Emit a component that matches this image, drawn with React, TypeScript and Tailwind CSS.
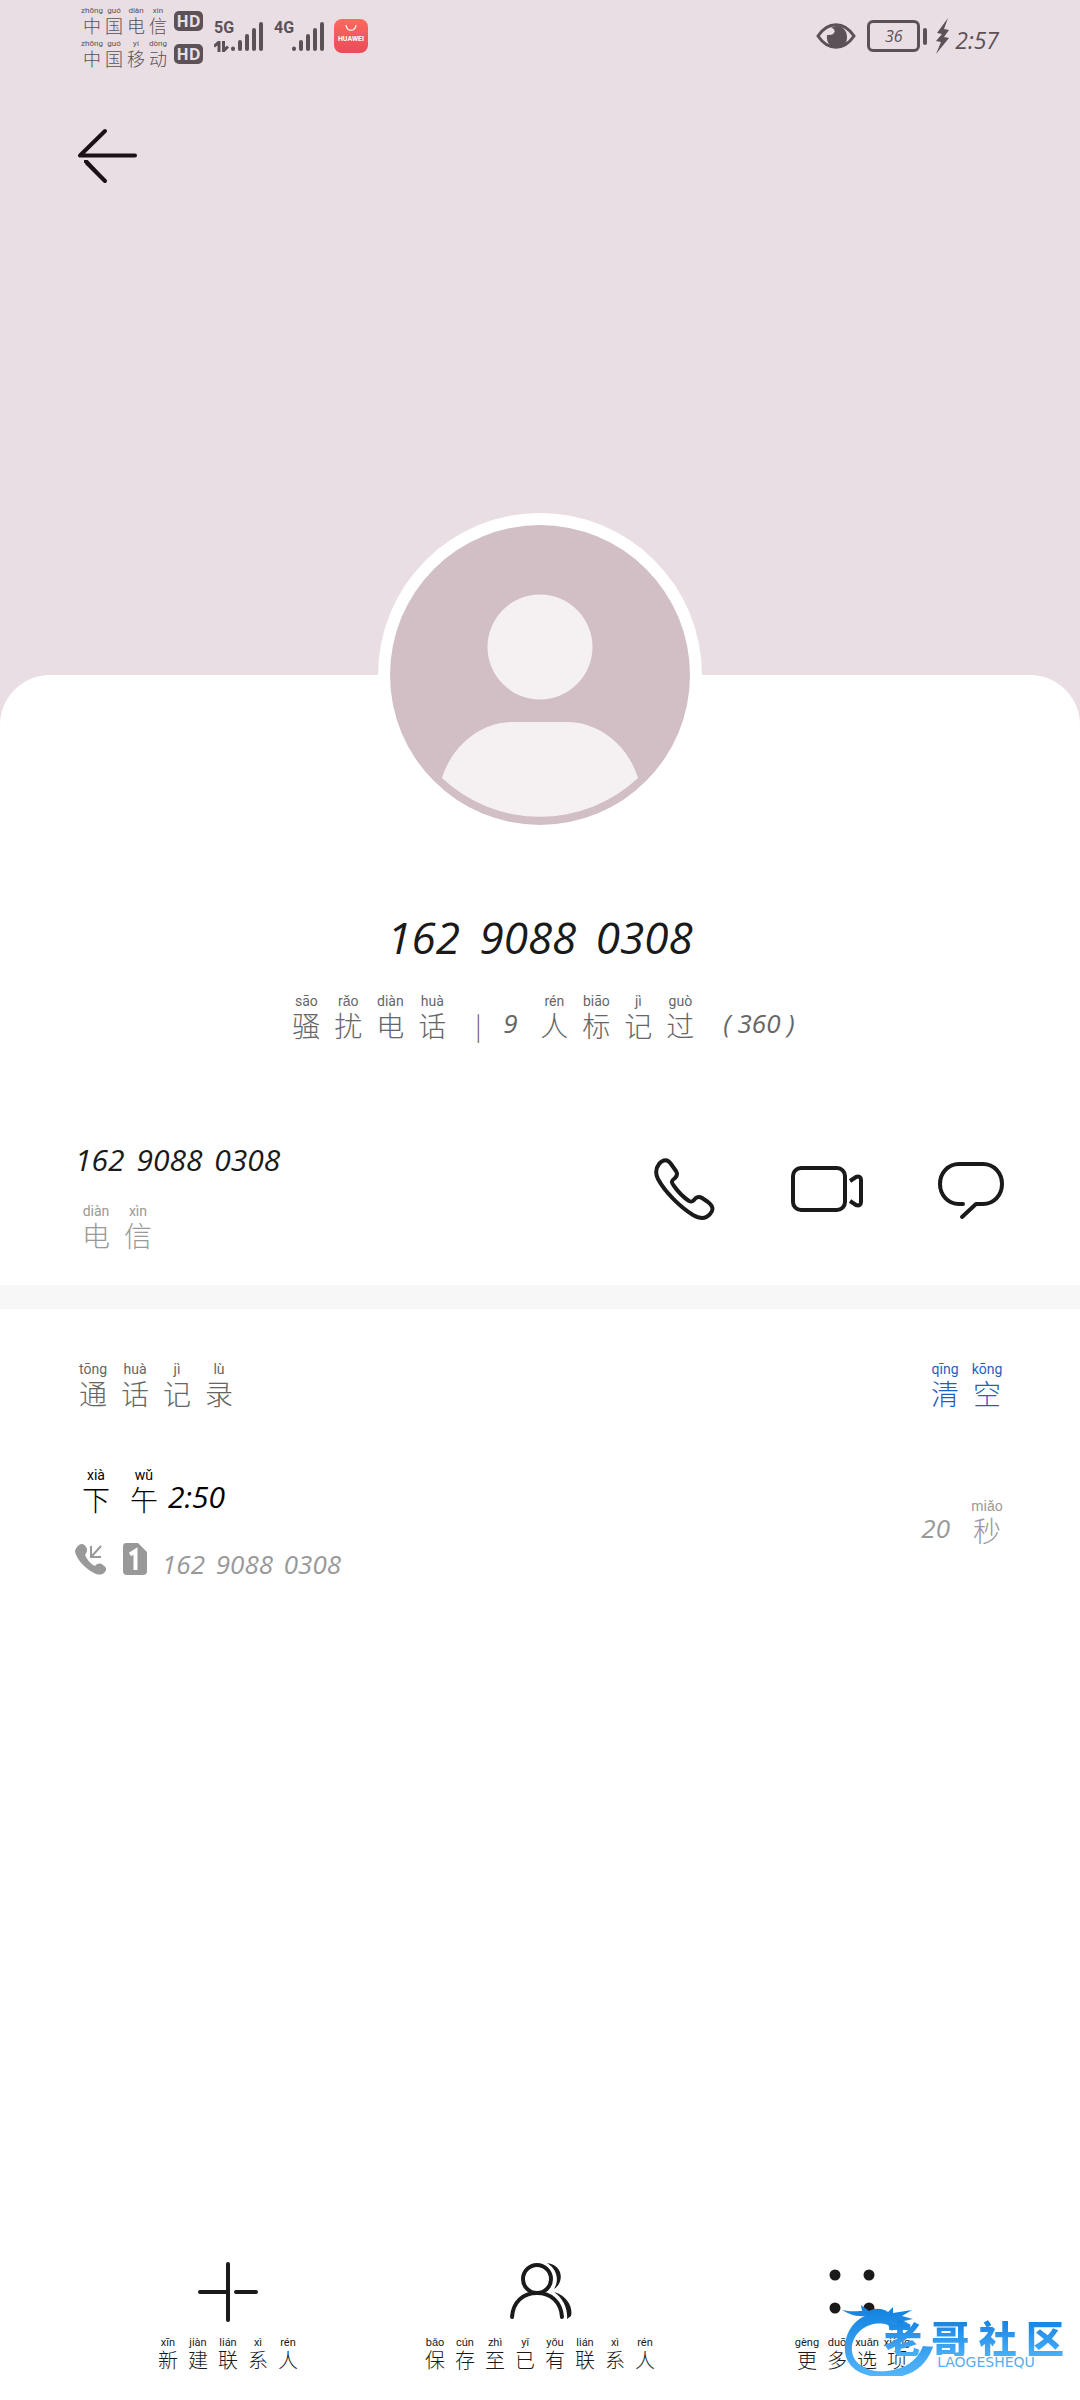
import type { ReactNode } from "react";

const HAND = "font-['Open_Sans',sans-serif] italic";

type Pair = [string, string];

const sizes = {
  xs: { cell: "w-[22px]", rt: "text-[8px] leading-[9px]", ch: "text-[18px] leading-[20px]" },
  sm: { cell: "w-[30px]", rt: "text-[11px] leading-[12px]", ch: "text-[20px] leading-[22px]" },
  lg: { cell: "w-[42px]", rt: "text-[14px] leading-[16px]", ch: "text-[28px] leading-[32px]" },
  xl: { cell: "w-[48px]", rt: "text-[14px] leading-[16px]", ch: "text-[28px] leading-[32px]" },
};

function Annotated({ pairs, size }: { pairs: Pair[]; size: keyof typeof sizes }) {
  const s = sizes[size];
  return (
    <span className="flex">
      {pairs.map(([ch, py]) => (
        <ruby key={ch} className={`flex flex-col-reverse items-center ${s.cell}`}>
          <span className={`font-light ${s.ch}`}>{ch}</span>
          <rt className={`block whitespace-nowrap font-['Roboto',sans-serif] ${s.rt}`}>{py}</rt>
        </ruby>
      ))}
    </span>
  );
}

function PhoneNumber({ className, gap }: { className: string; gap: string }) {
  return (
    <span className={`block whitespace-nowrap ${HAND} ${className}`}>
      <span>162</span> <span className={gap}>9088</span> <span className={gap}>0308</span>
    </span>
  );
}

function HdBadge() {
  return (
    <span className="flex h-[20px] w-[29px] items-center justify-center rounded-[5px] bg-[#5b5156] font-['Open_Sans',sans-serif] text-[16px] leading-[20px] font-bold text-[#e9dee4]">
      HD
    </span>
  );
}

function Bars() {
  return (
    <svg className="h-[32px] w-[34px]" viewBox="0 0 34 32" stroke="#5b5156" strokeWidth="4" strokeLinecap="round" aria-hidden="true">
      <path d="M3 28.5v.5M10 22v7M17 16v13M24 10v19M31 4v25" />
    </svg>
  );
}

function StatusBar() {
  return (
    <div className="flex h-[72px] items-start justify-between px-[81px] text-[#5b5156]">
      <div className="flex">
        <div className="flex flex-col gap-[4px] pt-[6px]">
          <div className="flex items-center gap-[5px]">
            <Annotated size="xs" pairs={[["中", "zhōng"], ["国", "guó"], ["电", "diàn"], ["信", "xìn"]]} />
            <HdBadge />
          </div>
          <div className="flex items-center gap-[5px]">
            <Annotated size="xs" pairs={[["中", "zhōng"], ["国", "guó"], ["移", "yí"], ["动", "dòng"]]} />
            <HdBadge />
          </div>
        </div>
        <div className="ml-[11px] flex pt-[20px]">
          <div className="flex w-[16px] flex-col font-['Roboto',sans-serif] text-[16px] leading-[16px] font-bold">
            5G
            <svg className="mt-[5px] h-[11px] w-[15px]" viewBox="0 0 15 11" fill="none" stroke="#5b5156" strokeWidth="3" aria-hidden="true">
              <path d="M5 11V1L0 5.500M9.500 0v10L14 5.500" />
            </svg>
          </div>
          <Bars />
        </div>
        <div className="ml-[10px] flex pt-[20px]">
          <span className="w-[17px] font-['Roboto',sans-serif] text-[16px] leading-[16px] font-bold">4G</span>
          <Bars />
        </div>
        <div className="mt-[19px] ml-[9px] flex h-[34px] w-[34px] flex-col items-center rounded-[8px] bg-linear-to-b from-[#fb6a5e] to-[#ea4b59] pt-[6px] text-white">
          <svg className="h-[7px] w-[12px]" viewBox="0 0 12 7" fill="none" stroke="#ffe3df" strokeWidth="1.500" aria-hidden="true">
            <path d="M1 0c1 7 9 7 10 0" />
          </svg>
          <span className="mt-[3px] font-['Roboto',sans-serif] text-[7px] leading-[8px] font-bold">HUAWEI</span>
        </div>
      </div>
      <div className="flex h-[72px] items-center">
        <svg className="h-[28px] w-[40px]" viewBox="0 0 40 28" aria-hidden="true">
          <path d="M2 14C12-1 28-1 38 14 28 29 12 29 2 14Z" fill="none" stroke="#5b5156" strokeWidth="3" />
          <path d="M15 6c5 0 6 8-4 7-1 8 4 13 10 13s10-4 10-11S26 4 21 4c-3 0-4 1-6 2Z" fill="#5b5156" />
        </svg>
        <div className={`ml-[11px] flex h-[32px] w-[53px] items-center justify-center rounded-[6px] border-3 border-[#5b5156] text-[16px] ${HAND}`}>36</div>
        <div className="ml-[3px] h-[17px] w-[4px] rounded-full bg-[#5b5156]" />
        <svg className="ml-[8px] h-[36px] w-[14px]" viewBox="0 0 14 36" fill="#5b5156" aria-hidden="true">
          <path d="M13 0 2 15l5 1-6 7 5 1-5 12 13-16-5-1 5-7-5-1Z" />
        </svg>
        <span className={`mt-[8px] ml-[6px] text-[23px] leading-[32px] ${HAND}`}>2:57</span>
      </div>
    </div>
  );
}

function Avatar() {
  return (
    <svg className="h-[324px] w-[324px]" viewBox="0 0 324 324" role="img" aria-label="联系人头像">
      <circle cx="162" cy="162" r="162" fill="#fff" />
      <circle cx="162" cy="162" r="150" fill="#d1bfc5" />
      <circle cx="162" cy="134" r="52.500" fill="#f5f1f3" />
      <path d="M64 265C75 230 105 209 135 209h54c30 0 60 21 71 56a143 143 0 0 1-196 0Z" fill="#f5f1f3" />
    </svg>
  );
}

function LineIcon({ label, box, view, children }: { label: string; box: string; view: string; children: ReactNode }) {
  return (
    <button type="button" aria-label={label}>
      <svg className={box} viewBox={view} fill="none" stroke="#1a1a1a" strokeWidth="4" strokeLinecap="round" strokeLinejoin="round" aria-hidden="true">
        {children}
      </svg>
    </button>
  );
}

function ActionButton({ icon, pairs }: { icon: ReactNode; pairs: Pair[] }) {
  return (
    <button type="button" className="flex flex-1 flex-col items-center gap-[13px]">
      <svg className="h-[64px] w-[64px]" viewBox="0 0 64 64" fill="none" stroke="#1a1a1a" strokeWidth="4" strokeLinecap="round" aria-hidden="true">
        {icon}
      </svg>
      <Annotated size="sm" pairs={pairs} />
    </button>
  );
}

function Watermark() {
  return (
    <div className="pointer-events-none absolute right-[16px] bottom-[24px] flex w-[222px] justify-end pb-[8px]">
      <svg className="absolute bottom-0 left-0 h-[74px] w-[92px]" viewBox="0 0 92 74" aria-hidden="true">
        <defs>
          <linearGradient id="wave" x1="0" y1="0" x2="0" y2="1">
            <stop offset="0" stopColor="#0f80e0" />
            <stop offset="1" stopColor="#55b6fa" />
          </linearGradient>
        </defs>
        <path d="M0 8c9 2 13 1 20 1L19 3l8 6c6-3 13-3 19 1l5-5v6l19-3-10 6 11 3-9 2 7 4-12 0-7 6-4-6c-14-5-33 3-36 21-2 17 15 27 35 25 18-2 30-10 36-25 8 1 11 0 10 1-8 22-25 31-47 31C17 75 1 64 3 43 4 29 13 18 23 14 14 15 7 12 0 8Z" fill="url(#wave)" />
      </svg>
      <div className="relative flex w-[180px] flex-col items-center">
        <div className="flex w-full justify-between bg-linear-to-b from-[#0f80e0] to-[#48aff8] bg-clip-text text-[38px] leading-[38px] font-black text-transparent">
          <span>老</span>
          <span>哥</span>
          <span>社</span>
          <span>区</span>
        </div>
        <span className="ml-[24px] font-['DejaVu_Sans',sans-serif] text-[14px] leading-[12px] text-[#55aef2]">LAOGESHEQU</span>
      </div>
    </div>
  );
}

export default function App() {
  return (
    <div className="relative flex min-h-screen flex-col bg-[#e9dee4] font-['Noto_Sans_CJK_SC',sans-serif] text-[#1a1a1a]">
      <StatusBar />
      <header className="px-[76px] pt-[54px]">
        <button type="button" aria-label="返回" className="block">
          <svg className="h-[60px] w-[64px]" viewBox="0 0 64 60" fill="none" stroke="#1a1218" strokeWidth="4" strokeLinecap="round" aria-hidden="true">
            <path d="M29 5 4 29.500h55" strokeLinejoin="round" />
            <path d="M8 35.500h3L29 55" strokeLinecap="butt" strokeWidth="3" />
            <path d="M11 37 29 55" />
          </svg>
        </button>
      </header>

      <main className="mt-[489px] flex flex-1 flex-col rounded-t-[50px] bg-white">
        <section className="-mt-[162px] flex flex-col items-center">
          <Avatar />
          <h1 className="mt-[72px]">
            <PhoneNumber className="text-[44px] leading-[56px]" gap="ml-[8px]" />
          </h1>
          <div className="mt-[28px] flex items-end text-[#666]">
            <Annotated size="lg" pairs={[["骚", "sāo"], ["扰", "rǎo"], ["电", "diàn"], ["话", "huà"]]} />
            <span className="w-[50px] text-center text-[26px] leading-[32px] font-light">|</span>
            <span className={`w-[30px] text-[26px] leading-[36px] ${HAND}`}>9</span>
            <Annotated size="lg" pairs={[["人", "rén"], ["标", "biāo"], ["记", "jì"], ["过", "guò"]]} />
            <span className={`ml-[22px] text-[26px] leading-[36px] ${HAND}`}>( 360 )</span>
          </div>
        </section>

        <section className="mt-[99px] flex items-center justify-between px-[75px] pb-[34px]">
          <div className="flex flex-col gap-[23px]">
            <PhoneNumber className="text-[30px] leading-[40px]" gap="ml-[4px]" />
            <div className="text-[#999]">
              <Annotated size="lg" pairs={[["电", "diàn"], ["信", "xìn"]]} />
            </div>
          </div>
          <div className="mb-[14px] flex items-center gap-[73px]">
            <LineIcon label="拨打电话" box="h-[64px] w-[64px]" view="0 0 64 64">
              <path d="M6 7c4-5 9-5 12 0l5 7c2 3 1 5-1 7-4 3-4 4-1 8 5 7 9 11 15 15 2 1 3 1 5-1 2-3 5-4 8-2l6 4c5 4 6 8 2 12-4 5-10 5-17 1C27 50 12 35 5 22 2 16 3 11 6 7Z" />
            </LineIcon>
            <LineIcon label="视频通话" box="h-[64px] w-[74px]" view="0 0 74 64">
              <rect x="3" y="11" width="52" height="42" rx="8" />
              <path d="m60 24 6-4c3-1 5 0 5 3v22c0 3-2 4-5 3l-6-4" strokeLinecap="butt" />
            </LineIcon>
            <LineIcon label="发送信息" box="h-[64px] w-[68px]" view="0 0 68 64">
              <path d="M26 47h-4C11 47 3 38 3 27S11 7 22 7h24c11 0 19 9 19 20s-8 20-19 20h-7L25 60" />
            </LineIcon>
          </div>
        </section>

        <div className="h-[24px] bg-[#f7f7f7]" />

        <section className="px-[72px] pt-[52px]">
          <div className="flex justify-between">
            <h2 className="text-[#666]">
              <Annotated size="lg" pairs={[["通", "tōng"], ["话", "huà"], ["记", "jì"], ["录", "lù"]]} />
            </h2>
            <button type="button" className="text-[#1f5fbf]">
              <Annotated size="lg" pairs={[["清", "qīng"], ["空", "kōng"]]} />
            </button>
          </div>
          <div className="mt-[58px] flex items-center justify-between">
            <div className="flex flex-col gap-[26px]">
              <div className="flex items-end text-black">
                <Annotated size="xl" pairs={[["下", "xià"], ["午", "wǔ"]]} />
                <span className={`text-[30px] leading-[36px] ${HAND}`}>2:50</span>
              </div>
              <div className="flex h-[36px] items-center text-[#999]">
                <svg className="ml-[2px] h-[34px] w-[34px]" viewBox="0 0 34 34" aria-hidden="true">
                  <path d="M3 5c3-4 7-4 9 0 2 3 1 5-1 8 2 5 6 9 10 11 3-3 5-3 8-1 4 3 4 5 1 8-3 2-6 2-10 0C10 26 3 17 1 10c0-2 1-4 2-5Z" fill="#999" />
                  <path d="M27 4 18 14M17 4v11h10" fill="none" stroke="#999" strokeWidth="2" />
                </svg>
                <svg className="ml-[14px] h-[34px] w-[26px]" viewBox="0 0 26 34" aria-hidden="true">
                  <path d="M4 1h12l9 9v19q0 4-4 4H5q-4 0-4-4V5q0-4 3-4Z" fill="#999" />
                  <path d="M8 12.500 13.500 9v19" fill="none" stroke="#fff" strokeWidth="4" />
                </svg>
                <div className="ml-[14px] pt-[10px]">
                  <PhoneNumber className="text-[26px] leading-[26px]" gap="ml-[4px]" />
                </div>
              </div>
            </div>
            <div className="flex items-end text-[#999]">
              <span className={`mr-[16px] text-[26px] leading-[36px] ${HAND}`}>20</span>
              <Annotated size="lg" pairs={[["秒", "miǎo"]]} />
            </div>
          </div>
        </section>

        <footer className="mt-auto flex px-[72px] pt-[40px] pb-[29px]">
          <ActionButton
            pairs={[["新", "xīn"], ["建", "jiàn"], ["联", "lián"], ["系", "xì"], ["人", "rén"]]}
            icon={<path d="M32 4v56M4 32h28M40 32h20" />}
          />
          <ActionButton
            pairs={[["保", "bǎo"], ["存", "cún"], ["至", "zhì"], ["已", "yǐ"], ["有", "yǒu"], ["联", "lián"], ["系", "xì"], ["人", "rén"]]}
            icon={
              <>
                <circle cx="29" cy="19" r="14" />
                <path d="M4 57C5 42 15 33 29 33s24 9 25 24" />
                <path d="M39 3c17 2 17 20 7 26 5-8 4-19-7-26ZM46 32c14 4 19 16 17 24l-4 3c1-10-4-21-13-27Z" fill="#1a1a1a" stroke="none" />
              </>
            }
          />
          <ActionButton
            pairs={[["更", "gèng"], ["多", "duō"], ["选", "xuǎn"], ["项", "xiàng"]]}
            icon={
              <g fill="#1a1a1a" stroke="none">
                <circle cx="15" cy="15" r="5.500" />
                <circle cx="49" cy="15" r="5.500" />
                <circle cx="15" cy="48" r="5.500" />
                <circle cx="49" cy="48" r="5.500" />
              </g>
            }
          />
        </footer>
      </main>
      <Watermark />
    </div>
  );
}
